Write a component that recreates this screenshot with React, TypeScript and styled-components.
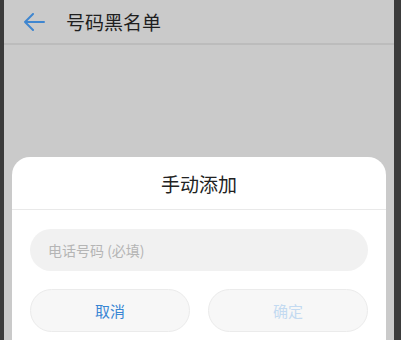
import styled, { createGlobalStyle } from 'styled-components';

const GlobalStyle = createGlobalStyle`
  body {
    margin: 0;
    background: #3b3b3b;
    font-family: "Noto Sans CJK SC", "Noto Sans", sans-serif;
  }
`;

function App() {
  return (
    <>
      <GlobalStyle />
      <Screen>
        <Header>
          <BackButton>
            <svg width="22" height="18" viewBox="0 0 22 18" fill="none">
              <path
                d="M21 9H2M10 1L2 9l8 8"
                stroke="#3f86d0"
                strokeWidth="2"
                strokeLinecap="round"
                strokeLinejoin="round"
              />
            </svg>
          </BackButton>
          <HeaderTitle>号码黑名单</HeaderTitle>
        </Header>
        <Dialog>
          <DialogTitle>手动添加</DialogTitle>
          <DialogBody>
            <PhoneInput placeholder="电话号码 (必填)" />
            <ButtonRow>
              <ActionButton>取消</ActionButton>
              <ActionButton disabled>确定</ActionButton>
            </ButtonRow>
          </DialogBody>
        </Dialog>
      </Screen>
    </>
  );
}

const Screen = styled.div`
  margin-left: 4px;
  width: 390px;
  height: 340px;
  overflow: hidden;
  background: #cacaca;
  display: flex;
  flex-direction: column;
`;

const Header = styled.div`
  height: 43px;
  flex-shrink: 0;
  display: flex;
  align-items: center;
  border-bottom: 2px solid #bcbcbc;
`;

const BackButton = styled.div`
  width: 22px;
  height: 18px;
  margin-left: 19px;
  margin-right: 21px;
  display: flex;
`;

const HeaderTitle = styled.h1`
  margin: 0;
  font-size: 19px;
  font-weight: 400;
  color: #1f1f1f;
  line-height: 1;
`;

const Dialog = styled.div`
  margin: 112px 8px 0;
  flex-shrink: 0;
  height: 220px;
  background: #ffffff;
  border-radius: 18px 18px 0 0;
  display: flex;
  flex-direction: column;
`;

const DialogTitle = styled.div`
  height: 52px;
  line-height: 54px;
  text-align: center;
  font-size: 19px;
  color: #222222;
  border-bottom: 1px solid #e9e9e9;
`;

const DialogBody = styled.div`
  padding: 19px 18px 0;
  display: flex;
  flex-direction: column;
  gap: 18px;
`;

const PhoneInput = styled.input`
  height: 42px;
  border: none;
  outline: none;
  border-radius: 21px;
  background: #f1f1f1;
  padding: 0 18px;
  font-family: inherit;
  font-size: 14px;
  color: #333333;

  &::placeholder {
    color: #b5b5b5;
  }
`;

const ButtonRow = styled.div`
  display: grid;
  grid-template-columns: 1fr 1fr;
  gap: 18px;
`;

const ActionButton = styled.button`
  height: 43px;
  border-radius: 22px;
  border: 1px solid #ebebeb;
  background: #f7f7f7;
  font-family: inherit;
  font-size: 15px;
  color: ${({ disabled }) => (disabled ? '#c3daf1' : '#3a86d4')};
  padding: 0;
`;

export default App;
